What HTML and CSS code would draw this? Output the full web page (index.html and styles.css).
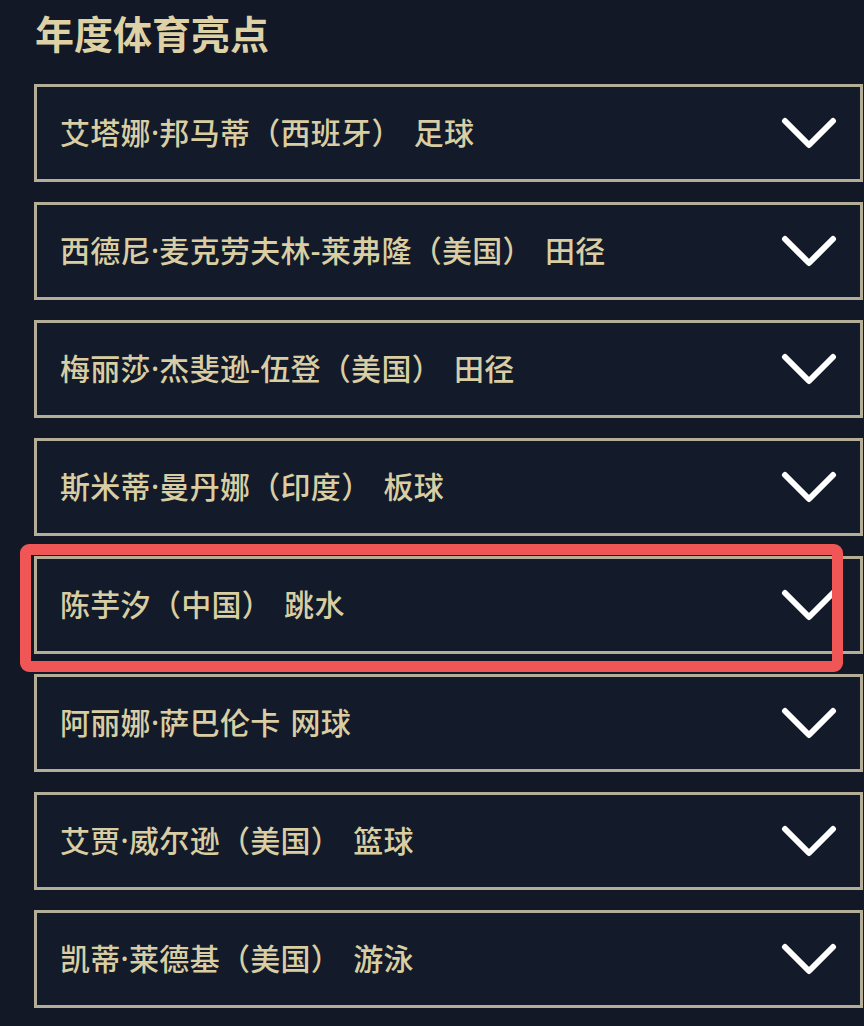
FILE: index.html
```html
<!DOCTYPE html>
<html lang="zh-CN">
<head>
<meta charset="utf-8">
<title>年度体育亮点</title>
<link rel="stylesheet" href="styles.css">
</head>
<body>
<main class="page">
  <h1 class="title">年度体育亮点</h1>
  <ul class="list">
    <li class="item"><span class="name">艾塔娜·邦马蒂（西班牙）<span class="sport">足球</span></span><svg class="chev" viewBox="0 0 56 32"><polyline points="4,4 28,28 52,4"/></svg></li>
    <li class="item"><span class="name">西德尼·麦克劳夫林-莱弗隆（美国）<span class="sport">田径</span></span><svg class="chev" viewBox="0 0 56 32"><polyline points="4,4 28,28 52,4"/></svg></li>
    <li class="item"><span class="name">梅丽莎·杰斐逊-伍登（美国）<span class="sport">田径</span></span><svg class="chev" viewBox="0 0 56 32"><polyline points="4,4 28,28 52,4"/></svg></li>
    <li class="item"><span class="name">斯米蒂·曼丹娜（印度）<span class="sport">板球</span></span><svg class="chev" viewBox="0 0 56 32"><polyline points="4,4 28,28 52,4"/></svg></li>
    <li class="item marked"><span class="name">陈芋汐（中国）<span class="sport">跳水</span></span><svg class="chev" viewBox="0 0 56 32"><polyline points="4,4 28,28 52,4"/></svg><span class="highlight"></span></li>
    <li class="item"><span class="name">阿丽娜·萨巴伦卡<span class="sport sport-near">网球</span></span><svg class="chev" viewBox="0 0 56 32"><polyline points="4,4 28,28 52,4"/></svg></li>
    <li class="item"><span class="name">艾贾·威尔逊（美国）<span class="sport">篮球</span></span><svg class="chev" viewBox="0 0 56 32"><polyline points="4,4 28,28 52,4"/></svg></li>
    <li class="item"><span class="name">凯蒂·莱德基（美国）<span class="sport">游泳</span></span><svg class="chev" viewBox="0 0 56 32"><polyline points="4,4 28,28 52,4"/></svg></li>
  </ul>
</main>
</body>
</html>
```
FILE: styles.css
```css
html, body {
  margin: 0;
  padding: 0;
  background: #121826;
}

.page {
  padding: 0 1px 0 34px;
  font-family: "Noto Sans CJK SC", "Noto Sans", sans-serif;
  color: #d9cea3;
}

.title {
  margin: 0;
  padding: 10px 0 0 1px;
  height: 84px;
  box-sizing: border-box;
  font-size: 39px;
  line-height: 44px;
  font-weight: 700;
  color: #ddd1a5;
  letter-spacing: 0;
}

.list {
  list-style: none;
  margin: 0;
  padding: 0;
  display: flex;
  flex-direction: column;
  gap: 20px;
}

.item {
  position: relative;
  height: 98px;
  box-sizing: border-box;
  border: 3px solid #b4ae98;
  background: #131a29;
  display: flex;
  align-items: center;
  justify-content: space-between;
  padding: 0 23px 0 23px;
}

.name {
  font-family: "Noto Sans", "Noto Sans CJK SC", sans-serif;
  font-size: 30px;
  font-weight: 500;
  line-height: 1;
  letter-spacing: 0.3px;
  white-space: nowrap;
}

.sport {
  margin-left: 12px;
}

.sport-near {
  margin-left: 10px;
}

.chev {
  width: 56px;
  height: 32px;
  flex: none;
}

.chev polyline {
  fill: none;
  stroke: #ffffff;
  stroke-width: 6;
  stroke-linecap: round;
  stroke-linejoin: round;
}

.highlight {
  position: absolute;
  top: -15px;
  left: -17px;
  right: 17px;
  bottom: -21px;
  border: 11px solid #f05656;
  border-radius: 9px;
  pointer-events: none;
}
```
